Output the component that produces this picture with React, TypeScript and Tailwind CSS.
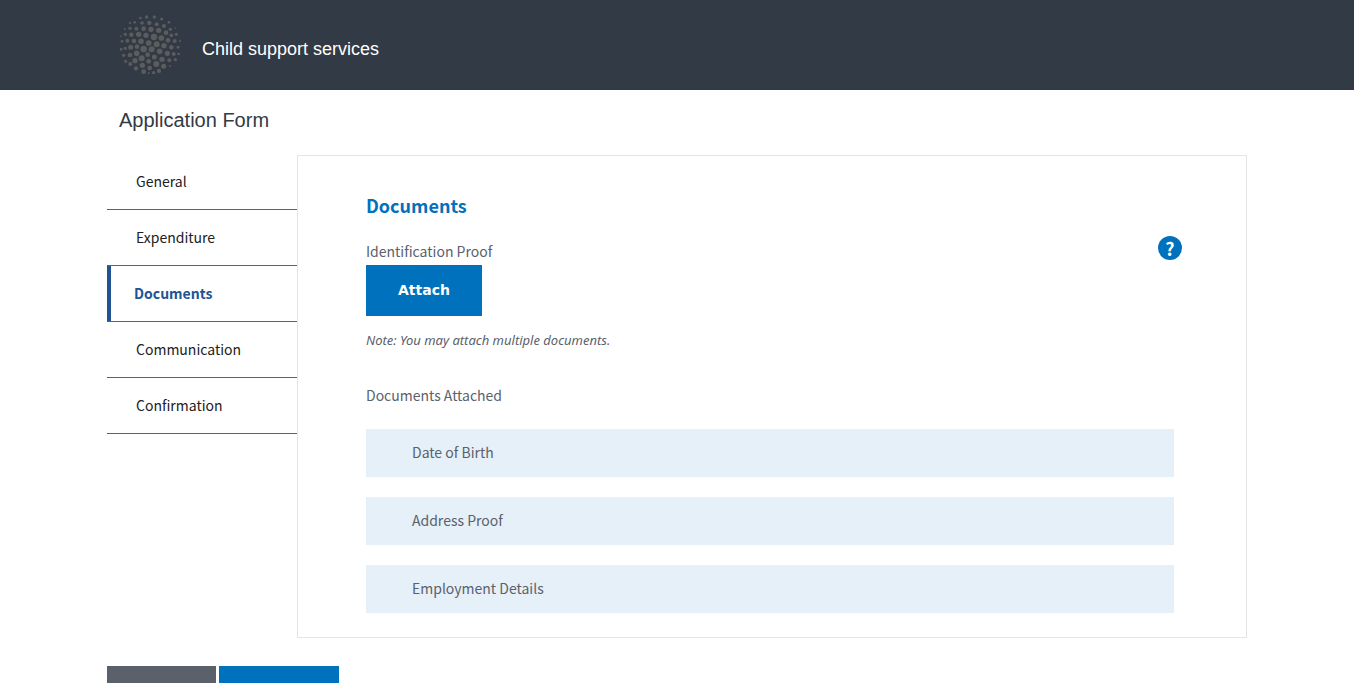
const DOTS: [number, number, number][] = [
  [91, 39, 4], [110, 36, 5], [133, 36, 5], [155, 42, 4.5],
  [60, 54, 3.5], [74, 52, 4], [96, 54, 5.5], [118, 54, 6.5], [140, 58, 6], [177, 52, 4], [162, 63, 6],
  [44, 72, 3], [60, 70, 5], [79, 71, 6], [101, 71, 7], [123, 73, 8], [146, 76, 8], [181, 73, 5], [195, 69, 2.5],
  [33, 94, 2.5], [46, 88, 5], [64, 89, 6.5], [86, 88, 8], [108, 91, 8], [132, 96, 9.5], [154, 99, 8.5], [168, 83, 7], [184, 91, 5.5], [199, 88, 4.5],
  [36, 109, 4], [52, 107, 6], [72, 108, 7], [93, 109, 8.5], [116, 114, 8.5], [174, 106, 7], [194, 108, 6], [210, 108, 3],
  [140, 118, 9], [162, 122, 8], [184, 127, 7], [204, 127, 4.5],
  [33, 133, 4.5], [46, 130, 5], [62, 127, 7.5], [81, 125, 7], [101, 132, 10], [125, 133, 9], [149, 139, 8.5],
  [41, 151, 5], [60, 150, 7], [80, 145, 8.5], [113, 149, 7], [172, 145, 8], [191, 147, 6], [206, 147, 4],
  [47, 169, 4.5], [75, 167, 8], [95, 160, 9], [133, 156, 7.5], [156, 163, 8], [178, 166, 6], [196, 164, 5],
  [61, 177, 6], [97, 181, 8], [116, 169, 7], [139, 177, 9], [161, 184, 7.5], [180, 183, 3],
  [78, 190, 6.5], [119, 189, 7], [101, 200, 7], [147, 198, 6.5], [116, 205, 3], [131, 203, 5],
];

const STEPS = ["General", "Expenditure", "Documents", "Communication", "Confirmation"];
const ATTACHED = ["Date of Birth", "Address Proof", "Employment Details"];

function Logo() {
  return (
    <svg viewBox="30 27 186 186" className="size-[62px] shrink-0" fill="#5b5c5d" aria-hidden="true">
      {DOTS.map(([x, y, r]) => (
        <circle key={`${x}-${y}`} cx={x} cy={y} r={r} />
      ))}
    </svg>
  );
}

function Step({ label, active }: { label: string; active: boolean }) {
  return (
    <li className="border-b border-[#5b616b]">
      <a
        href="#"
        aria-current={active ? "step" : undefined}
        className={
          active
            ? "flex h-[55px] items-center border-l-4 border-[#205493] pb-0.5 pl-[23px] font-bold text-[#205493]"
            : "flex h-[55px] items-center pb-0.5 pl-[29px] text-[#212121]"
        }
      >
        {label}
      </a>
    </li>
  );
}

export default function App() {
  return (
    <div className="bg-white pr-3 font-['Noto_Sans_CJK_SC','Noto_Sans',sans-serif] text-sm leading-6 text-[#5b616b]">
      <header className="bg-[#323a45]">
        <div className="mx-auto flex h-[90px] max-w-[1140px] items-center gap-5 px-[13px]">
          <Logo />
          <span className="pt-2 font-['Liberation_Sans',sans-serif] text-lg text-white">Child support services</span>
        </div>
      </header>

      <main className="mx-auto max-w-[1140px]">
        <h1 className="px-3 pt-4 pb-[21px] font-['Liberation_Sans',sans-serif] text-xl leading-7 text-[#323a45]">
          Application Form
        </h1>

        <div className="flex items-start">
          <nav className="w-[190px] shrink-0 -mt-px" aria-label="Application steps">
            <ul>
              {STEPS.map((s) => (
                <Step key={s} label={s} active={s === "Documents"} />
              ))}
            </ul>
          </nav>

          <section className="min-w-0 flex-1 border border-[#e4e4e4] pt-9 pr-16 pb-6 pl-[68px]">
            <h2 className="text-lg leading-[26px] font-bold text-[#0071bc]">Documents</h2>
            <div className="mt-[18px] flex items-start justify-between">
              <div>
                <p className="pt-[3px] pb-0.5">Identification Proof</p>
                <button
                  type="button"
                  className="block h-[51px] w-[116px] bg-[#0071bc] pb-0.5 font-['DejaVu_Sans',sans-serif] text-sm font-bold text-white"
                >
                  Attach
                </button>
              </div>
              <button
                type="button"
                aria-label="Help"
                className="flex size-6 items-center justify-center rounded-full bg-[#0071bc] text-lg font-bold text-white"
              >
                ?
              </button>
            </div>
            <p className="mt-3 font-['Noto_Sans',sans-serif] text-[13px] italic">Note: You may attach multiple documents.</p>
            <h3 className="mt-[31px]">Documents Attached</h3>
            <ul className="mt-[22px] mr-2 flex flex-col gap-5">
              {ATTACHED.map((d) => (
                <li key={d} className="flex h-12 items-center bg-[#e5f0f9] pb-0.5 pl-[46px]">
                  {d}
                </li>
              ))}
            </ul>
          </section>
        </div>

        <div className="mt-7 flex gap-[3px]">
          <button type="button" aria-label="Back" className="h-[51px] w-[109px] bg-[#5b616b]" />
          <button type="button" aria-label="Next" className="h-[51px] w-[120px] bg-[#0071bc]" />
        </div>
      </main>
    </div>
  );
}
